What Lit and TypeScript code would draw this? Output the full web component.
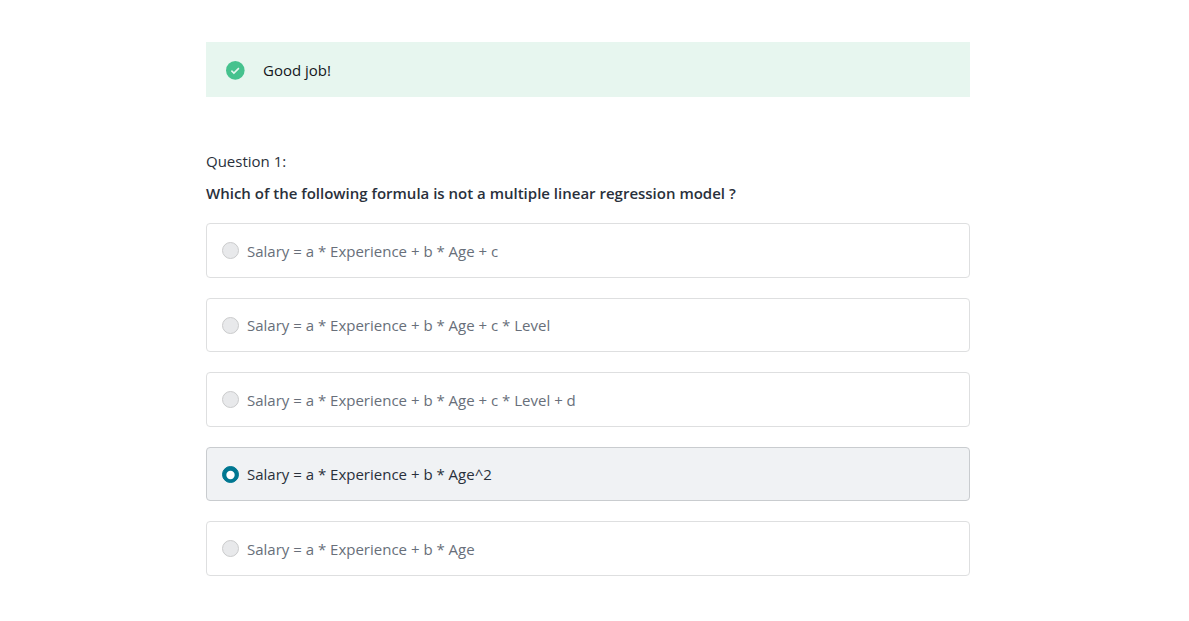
import { LitElement, html, css } from "lit";
import { customElement, property, state } from "lit/decorators.js";

@customElement("answer-option")
class AnswerOption extends LitElement {
  @property() label = "";
  @property({ type: Boolean, reflect: true }) selected = false;
  static styles = css`
    :host { display: block; }
    .row {
      box-sizing: border-box; height: 54.5px; display: flex; align-items: center;
      gap: 8px; padding: 1px 15px 0; border: 1px solid #dedfe0; border-radius: 4px;
      background: #fff; color: #686f7a;
    }
    .dot { width: 17px; height: 17px; flex: none; display: block; }
    .ring { fill: #e8e9eb; stroke: #cacbcc; }
    .hole { fill: none; }
    :host([selected]) .row { background: #f0f2f4; border-color: #c9cccf; color: #29303b; }
    :host([selected]) .ring { fill: #007791; stroke: #007791; }
    :host([selected]) .hole { fill: #fff; }
  `;
  render() {
    return html`<div class="row">
      <svg class="dot" viewBox="0 0 17 17">
        <circle class="ring" cx="8.5" cy="8.5" r="8" />
        <circle class="hole" cx="8.5" cy="9" r="4.2" />
      </svg>
      <span>${this.label}</span>
    </div>`;
  }
}

@customElement("app-root")
class AppRoot extends LitElement {
  @state() private options = [
    "Salary = a * Experience + b * Age + c",
    "Salary = a * Experience + b * Age + c * Level",
    "Salary = a * Experience + b * Age + c * Level + d",
    "Salary = a * Experience + b * Age^2",
    "Salary = a * Experience + b * Age",
  ];
  @state() private chosen = 3;
  static styles = css`
    :host {
      display: block; box-sizing: border-box; height: 621px; padding: 42px 0 0 206px;
      background: #fff; color: #29303b; overflow: hidden;
      font: 15px/22px "Open Sans", sans-serif;
    }
    .quiz { width: 764px; }
    .alert {
      box-sizing: border-box; height: 55px; display: flex; align-items: center; gap: 18px;
      padding: 0 20px; background: #e7f6ef; color: #14171c;
    }
    .check { width: 19px; height: 19px; flex: none; margin-top: 2px; }
    .number { margin-top: 53px; }
    .prompt { margin: 10px 0 19px; font-weight: 600; }
    .options { display: flex; flex-direction: column; gap: 20px; }
  `;
  render() {
    return html`<main class="quiz">
      <div class="alert">
        <svg class="check" viewBox="0 0 19 19"><circle cx="9.3" cy="9.4" r="9.3" fill="#46c28e"/><path d="M5.4 9.6l2.5 2.5 5-5" fill="none" stroke="#e7f6ef" stroke-width="1.5"/></svg>
        <span>Good job!</span>
      </div>
      <div class="number">Question 1:</div>
      <div class="prompt">Which of the following formula is not a multiple linear regression model ?</div>
      <div class="options">
        ${this.options.map((o, i) => html`<answer-option .label=${o} ?selected=${i === this.chosen}></answer-option>`)}
      </div>
    </main>`;
  }
}
